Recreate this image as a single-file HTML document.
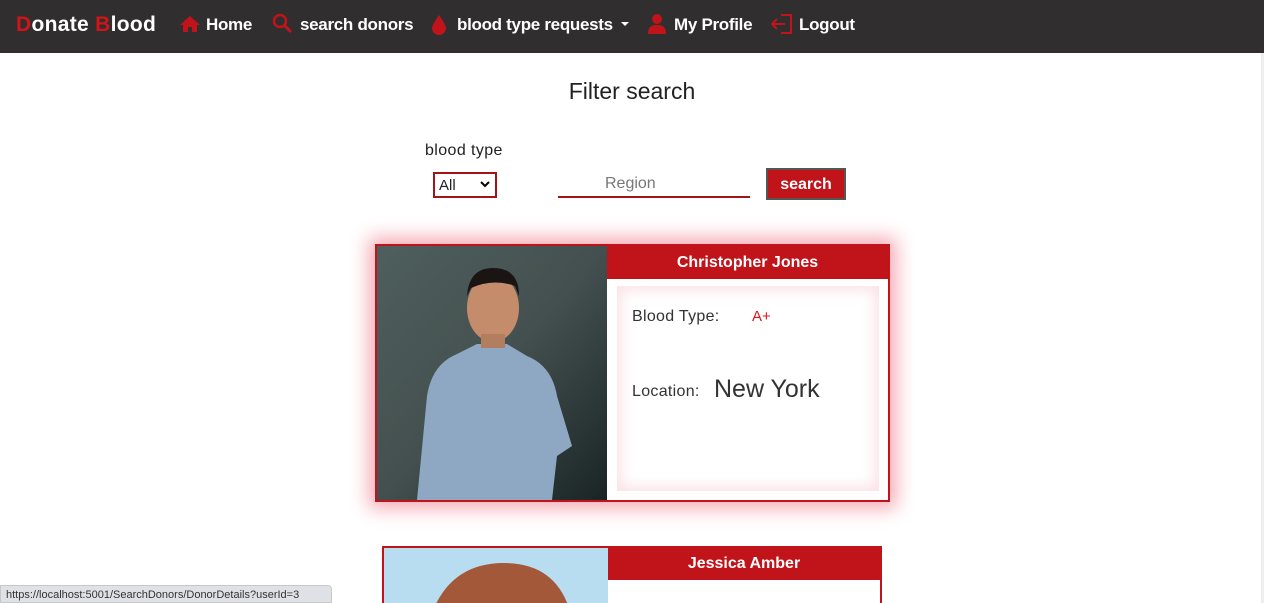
<!DOCTYPE html>
<html style="overflow:hidden;width:1264px;height:603px"><head><style>
*{margin:0;padding:0;box-sizing:border-box}
body{width:1264px;height:603px;overflow:hidden;background:#fff;font-family:"Liberation Sans",sans-serif;position:relative;color:#222}
.nav{position:absolute;left:0;top:0;width:1264px;height:53px;background:#302e2e;color:#fff;font-weight:bold;font-size:17px}
.nav span{position:absolute;top:15px;letter-spacing:-0.3px}
.r{color:#d0141a}
.abs{position:absolute}
.card{position:absolute;border:2px solid #c0141a;background:#fff}
.hdr{position:absolute;background:#c0141a;color:#fff;font-weight:bold;font-size:16px;text-align:center}
</style></head><body>
<div class="nav">
<span style="left:16px;font-size:21px;top:13px;letter-spacing:0.3px"><b class="r">D</b>onate <b class="r">B</b>lood</span>
<svg class="abs" style="left:179px;top:15px" width="22" height="18" viewBox="0 0 22 18"><path d="M11 1 L1 10 L4 10 L4 17 L9 17 L9 12 L13 12 L13 17 L18 17 L18 10 L21 10 Z" fill="#c0141a"/></svg>
<span style="left:206px">Home</span>
<svg class="abs" style="left:272px;top:13px" width="22" height="22" viewBox="0 0 22 22"><circle cx="8" cy="8" r="6" stroke="#c0141a" stroke-width="2.5" fill="none"/><path d="M12 12 L19 19" stroke="#c0141a" stroke-width="3"/></svg>
<span style="left:300px">search donors</span>
<svg class="abs" style="left:431px;top:14px" width="16" height="22" viewBox="0 0 16 22"><path d="M8 1 C8 1 1 11 1 14 A7 7 0 0 0 15 14 C15 11 8 1 8 1Z" fill="#c0141a"/></svg>
<span style="left:457px">blood type requests</span>
<svg class="abs" style="left:621px;top:22px" width="10" height="6"><path d="M0 0 L8 0 L4 4Z" fill="#fff"/></svg>
<svg class="abs" style="left:647px;top:13px" width="20" height="22" viewBox="0 0 20 22"><circle cx="10" cy="6" r="5" fill="#c0141a"/><path d="M1 21 C1 14 4 12 10 12 C16 12 19 14 19 21Z" fill="#c0141a"/></svg>
<span style="left:674px">My Profile</span>
<svg class="abs" style="left:771px;top:14px" width="22" height="20" viewBox="0 0 22 20"><path d="M10 1 L20 1 L20 19 L10 19" stroke="#c0141a" stroke-width="2" fill="none"/><path d="M1 10 L14 10 M6 5 L1 10 L6 15" stroke="#c0141a" stroke-width="2" fill="none"/></svg>
<span style="left:799px">Logout</span>
</div>
<div class="abs" style="left:1261px;top:53px;width:3px;height:550px;background:#eee"></div>
<div class="abs" style="left:0;top:78px;width:1264px;text-align:center;font-size:23px;color:#222">Filter search</div>
<div class="abs" style="left:425px;top:142px;font-size:16px;letter-spacing:0.4px">blood type</div>
<div class="abs" style="left:433px;top:172px;width:64px;height:26px;border:2px solid #a0141a;font-size:15px;padding:3px 0 0 4px">All<svg style="position:absolute;left:45px;top:7px" width="10" height="7"><path d="M1 1 L5 5 L9 1" stroke="#000" stroke-width="2" fill="none"/></svg></div>
<div class="abs" style="left:558px;top:172px;width:192px;height:26px;border-bottom:2px solid #a0141a;font-size:16px;color:#777;padding:3px 0 0 47px">Region</div>
<div class="abs" style="left:766px;top:168px;width:80px;height:32px;background:#c0141a;border:2px solid #555;color:#fff;font-weight:bold;font-size:16px;text-align:center;padding-top:6px">search</div>

<div class="card" style="left:375px;top:244px;width:515px;height:258px;box-shadow:0 0 18px 6px rgba(230,60,80,0.45)">
<svg class="abs" style="left:0;top:0" width="230" height="254" viewBox="0 0 230 254">
<defs><linearGradient id="g" x1="0" y1="0" x2="1" y2="1"><stop offset="0" stop-color="#4e5f5d"/><stop offset="0.5" stop-color="#44504f"/><stop offset="1" stop-color="#1a2425"/></linearGradient></defs>
<rect width="230" height="254" fill="url(#g)"/>
<path d="M40 254 L50 150 Q55 118 80 108 L100 98 L130 98 L150 110 Q175 120 180 150 L195 200 L180 210 L175 254Z" fill="#8ea7c2"/>
<ellipse cx="116" cy="62" rx="26" ry="34" fill="#c48c6b"/>
<path d="M90 50 Q92 22 116 22 Q142 22 142 50 L138 40 Q116 32 94 42Z" fill="#1a1412"/>
<rect x="104" y="88" width="24" height="14" fill="#b37e60"/>
</svg>
<div class="hdr" style="left:230px;top:0;width:281px;height:33px;padding-top:8px">Christopher Jones</div>
<div class="abs" style="left:240px;top:40px;width:262px;height:205px;box-shadow:inset 0 0 14px 4px rgba(240,170,180,0.35)"></div>
<div class="abs" style="left:255px;top:62px;font-size:16px;color:#333;letter-spacing:0.3px">Blood Type:</div>
<div class="abs" style="left:375px;top:62px;font-size:15px;color:#e0141a">A+</div>
<div class="abs" style="left:255px;top:137px;font-size:16px;color:#333;letter-spacing:0.3px">Location:</div>
<div class="abs" style="left:337px;top:129px;font-size:25px;color:#333">New York</div>
</div>

<div class="card" style="left:382px;top:546px;width:500px;height:57px;border-bottom:none">
<svg class="abs" style="left:0;top:0" width="224" height="60"><rect width="224" height="60" fill="#b9ddf0"/><path d="M50 60 Q70 15 120 15 Q170 15 185 60Z" fill="#a3583a"/></svg>
<div class="hdr" style="left:224px;top:0;width:272px;height:32px;padding-top:7px">Jessica Amber</div>
</div>
<div class="abs" style="left:0;top:585px;width:332px;height:18px;background:#dee1e6;border:1px solid #c8c8c8;border-radius:0 4px 0 0;font-size:11px;color:#333;padding:3px 0 0 5px">https://localhost:5001/SearchDonors/DonorDetails?userId=3</div>
</body></html>
